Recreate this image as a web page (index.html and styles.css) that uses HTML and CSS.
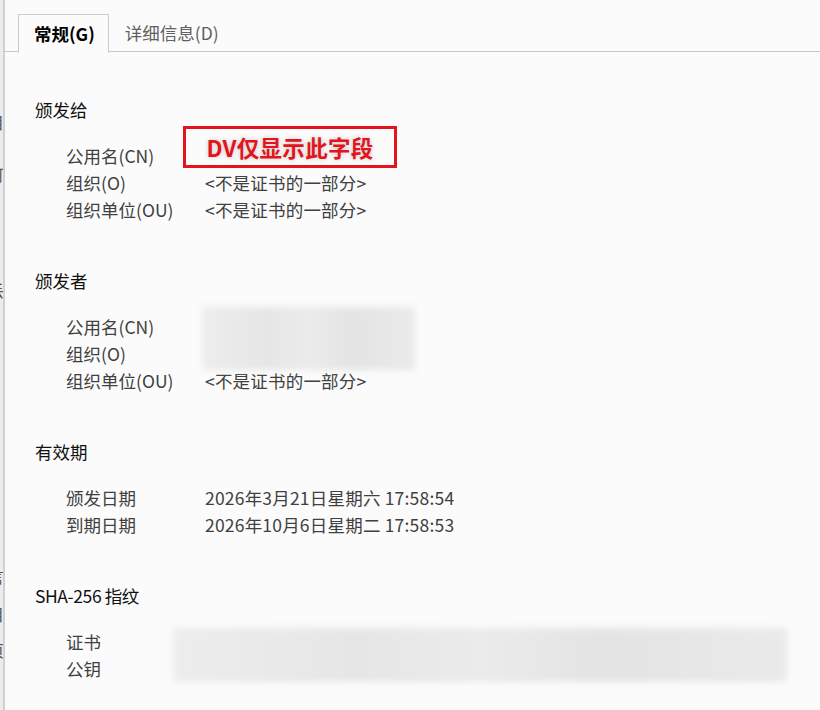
FILE: index.html
```html
<!DOCTYPE html>
<html lang="zh-CN">
<head>
<meta charset="utf-8">
<title>证书查看器</title>
<link rel="stylesheet" href="styles.css">
</head>
<body>
<div class="window">
  <div class="edge">
    <span class="frag f1">[</span>
    <span class="frag f2">目</span>
    <span class="frag f3">可</span>
    <span class="frag f4">I</span>
    <span class="frag f5">丢</span>
    <span class="frag f6">亻</span>
    <span class="frag f7">言</span>
    <span class="frag f8">目</span>
    <span class="frag f9">页</span>
  </div>
  <div class="panel">
    <div class="tabs">
      <div class="tab active">常规(G)</div>
      <div class="tab">详细信息(D)</div>
    </div>
    <div class="content">
      <section class="sec">
        <h2 class="head">颁发给</h2>
        <div class="grid">
          <div class="label">公用名(CN)</div>
          <div class="value note-cell"><div class="note">DV仅显示此字段</div></div>
          <div class="label">组织(O)</div>
          <div class="value">&lt;不是证书的一部分&gt;</div>
          <div class="label">组织单位(OU)</div>
          <div class="value">&lt;不是证书的一部分&gt;</div>
        </div>
      </section>
      <section class="sec">
        <h2 class="head">颁发者</h2>
        <div class="grid">
          <div class="label">公用名(CN)</div>
          <div class="value blur-cell"><div class="blur blur-issuer"></div></div>
          <div class="label">组织(O)</div>
          <div class="label">组织单位(OU)</div>
          <div class="value">&lt;不是证书的一部分&gt;</div>
        </div>
      </section>
      <section class="sec">
        <h2 class="head">有效期</h2>
        <div class="grid">
          <div class="label">颁发日期</div>
          <div class="value">2026年3月21日星期六 17:58:54</div>
          <div class="label">到期日期</div>
          <div class="value">2026年10月6日星期二 17:58:53</div>
        </div>
      </section>
      <section class="sec">
        <h2 class="head sha">SHA-256 指纹</h2>
        <div class="grid fp">
          <div class="label">证书</div>
          <div class="value blur-cell"><div class="blur blur-fp"></div></div>
          <div class="label">公钥</div>
        </div>
      </section>
    </div>
  </div>
</div>
</body>
</html>
```

FILE: styles.css
```css
html, body {
  margin: 0;
  padding: 0;
  background: #fbfbfb;
}
body {
  font-family: "Noto Sans CJK SC", "Noto Sans", sans-serif;
  font-size: 17.5px;
  color: #404040;
}
.window {
  display: flex;
  width: 820px;
  height: 710px;
  overflow: hidden;
}
.edge {
  width: 3px;
  flex: none;
  background: #ececec;
  border-right: 2px solid #d0d0d0;
  overflow: hidden;
  display: flex;
  flex-direction: column;
  color: #555;
  font-size: 16px;
  line-height: 16px;
}
.frag {
  display: block;
  margin-left: -12px;
  height: 16px;
}
.f1 { margin-top: 22px; }
.f2 { margin-top: 76px; }
.f3 { margin-top: 36px; }
.f4 { margin-top: 16px; }
.f5 { margin-top: 68px; }
.f6 { margin-top: 64px; }
.f7 { margin-top: 190px; }
.f8 { margin-top: 22px; }
.f9 { margin-top: 20px; }
.panel {
  flex: 1;
  padding-top: 14px;
}
.tabs {
  display: flex;
  padding-left: 13px;
  border-bottom: 1px solid #c6c6c6;
  height: 37px;
}
.tab {
  height: 37px;
  line-height: 37px;
  padding: 0 16px 0 16px;
  color: #606060;
  font-size: 17.5px;
}
.tab.active {
  border: 1px solid #cdcdcd;
  border-bottom: none;
  background: #fbfbfb;
  height: 38px;
  padding: 0 13px 0 15px;
  color: #000;
  font-weight: bold;
}
.content {
  padding: 44px 0 0 30px;
}
.sec {
  margin-bottom: 44px;
}
.head {
  margin: 0;
  font-size: 17.5px;
  font-weight: normal;
  line-height: 27px;
  color: #111;
}
.head.sha {
  letter-spacing: -0.4px;
}
.grid {
  display: grid;
  grid-template-columns: 139px 1fr;
  grid-auto-rows: 27px;
  line-height: 27px;
  padding-left: 31px;
  margin-top: 19px;
}
.grid.fp {
  grid-template-columns: 107px 1fr;
}
.label, .value {
  white-space: nowrap;
}
.value {
  letter-spacing: 0.2px;
}
.note-cell {
  position: relative;
}
.note {
  position: absolute;
  left: -22px;
  top: -16px;
  width: 208px;
  height: 36px;
  border: 3px solid #e5141c;
  color: #e5141c;
  font-weight: bold;
  font-size: 22.5px;
  letter-spacing: 0.3px;
  line-height: 36px;
  text-align: center;
  text-shadow: 0 0 5px rgba(0, 0, 0, 0.22);
  background: #fbfbfb;
}
.blur-cell {
  position: relative;
  grid-row: span 2;
}
.blur {
  position: absolute;
  background: linear-gradient(90deg, #ededed 0%, #e6e6e6 30%, #ebebeb 50%, #e4e4e4 70%, #eaeaea 100%);
  filter: blur(3px);
}
.blur-issuer {
  left: -3px;
  top: -6px;
  width: 213px;
  height: 63px;
}
.blur-fp {
  left: 0;
  top: 0;
  width: 614px;
  height: 54px;
}
```
